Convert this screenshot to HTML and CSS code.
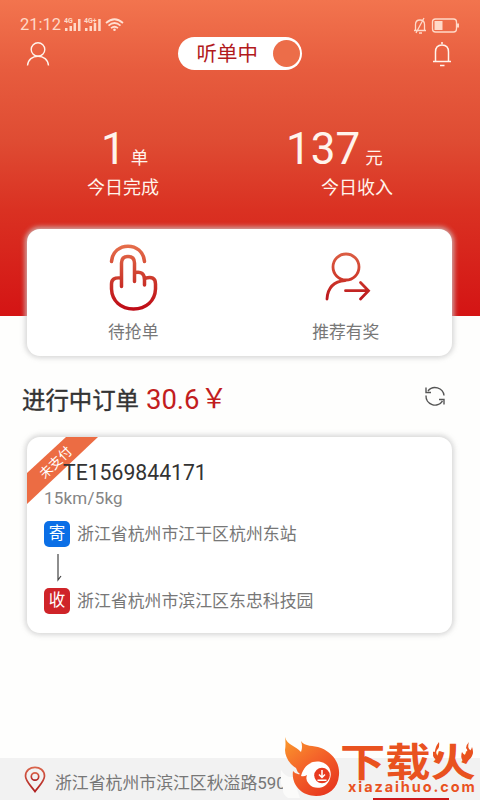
FILE: index.html
```html
<!DOCTYPE html>
<html lang="zh-CN">
<head>
<meta charset="utf-8">
<title>听单中</title>
<link rel="stylesheet" href="styles.css">
</head>
<body>
<div class="screen">
  <header class="hero">
    <div class="status">
      <span class="clock">21:12</span>
      <svg class="signal" width="62" height="16" viewBox="0 0 62 16">
        <g fill="#ffd9c8">
          <path d="M1 11h2.500v3H1zM5.500 9H8v5H5.500zM9.500 6H12v8H9.500zM14 2h2.500v12H14z"/>
          <path d="M21 11h2.500v3H21zM25.500 9H28v5h-2.500zM29.700 6h2.500v8h-2.500zM34.200 2h2.500v12h-2.500z"/>
          <text x="0" y="6" class="net">4G</text>
          <text x="20" y="6" class="net">4G+</text>
        </g>
        <g fill="none" stroke="#ffe0d2" stroke-width="1.700">
          <path d="M42 6Q50.500-1.500 59 6M44.500 8.600Q50.500 3.400 56.500 8.600M47 11.200Q50.500 8.300 54 11.200"/>
        </g>
        <circle cx="50.500" cy="12.800" r="1.300" fill="#ffe0d2"/>
      </svg>
      <svg class="battery" width="48" height="18" viewBox="0 0 48 18" fill="none" stroke="#ffd9c8" stroke-width="1.300">
        <path d="M2 14.500h12M3.500 14V8.500Q3.500 4 8 4t4.500 4.500V14M4 17L12 2M7 17h3"/>
        <rect x="20.500" y="3" width="24" height="13" rx="3"/>
        <rect x="22.500" y="5" width="8" height="9" fill="#ffd9c8" stroke="none"/>
        <path d="M46 7.500v4" stroke-width="2"/>
      </svg>
    </div>
    <div class="topbar">
      <svg width="24" height="26" viewBox="0 0 24 26" fill="none" stroke="#fff4ec" stroke-width="1.400">
        <circle cx="12" cy="8.500" r="6.800"/><path d="M1.500 24.500C2 18.500 6.500 15.300 12 15.300S22 18.500 22.500 24.500"/>
      </svg>
      <div class="toggle"><span>听单中</span><i></i></div>
      <svg width="20" height="26" viewBox="0 0 20 26" fill="none" stroke="#fff4ec" stroke-width="1.500">
        <path d="M1 20.500h18M3.500 20V11Q3.500 4 10 4t6.500 7v9M10 1v2M8 24.500h4.500"/>
      </svg>
    </div>
    <div class="stats">
      <div class="stat done"><p class="figure">1<small>单</small></p><p class="caption">今日完成</p></div>
      <div class="stat income"><p class="figure">137<small>元</small></p><p class="caption">今日收入</p></div>
    </div>
  </header>

  <section class="card actions">
    <div class="action grab">
      <svg width="50" height="68" viewBox="0 0 50 68" fill="none" stroke="url(#warm)" stroke-width="3.500" stroke-linecap="round" stroke-linejoin="round">
        <defs><linearGradient id="warm" gradientUnits="userSpaceOnUse" x1="0" y1="0" x2="0" y2="68"><stop offset="0" stop-color="#e6704c"/><stop offset=".5" stop-color="#cd3b2d"/><stop offset="1" stop-color="#bd0714"/></linearGradient></defs>
        <path d="M3.500 17.500C5-3 35-3 36.500 17.500"/>
        <path d="M13.500 42.500V19Q13.500 12.500 20 12.500T26.500 19V37.500M27 28.500Q36.500 26.500 36.500 36V41M36.500 34.500Q47.500 31 47.500 40V45C47 57 38 65 25.500 65S4 57 3.500 45V40Q3.500 33 12.500 34"/>
      </svg>
      <span>待抢单</span>
    </div>
    <div class="action invite">
      <svg width="48" height="52" viewBox="0 0 48 52" fill="none" stroke="url(#red)" stroke-width="2.800" stroke-linecap="round">
        <defs><linearGradient id="red" gradientUnits="userSpaceOnUse" x1="0" y1="0" x2="0" y2="52"><stop offset="0" stop-color="#dc6045"/><stop offset=".5" stop-color="#cf3b2c"/><stop offset="1" stop-color="#b8101a"/></linearGradient></defs>
        <circle cx="22" cy="16" r="13"/><path d="M21 29.500Q4 31 3 48"/><path d="M21.500 39.700H44M36.500 31.500L44.500 39.700L36.500 48"/>
      </svg>
      <span>推荐有奖</span>
    </div>
  </section>

  <div class="heading">
    <h1>进行中订单</h1><span class="amount">30.6</span><span class="currency">￥</span>
    <svg width="22" height="22" viewBox="0 0 22 22" fill="none" stroke="#555" stroke-width="1.400">
      <path d="M4 6A9 9 0 0 1 20 10.500M18.500 16A9 9 0 0 1 2 10.500M2 2.500V7.500H7M20 19.500V14.500H15"/>
    </svg>
  </div>

  <section class="card order">
    <div class="ribbon"><span>未支付</span></div>
    <div class="order-id">TE1569844171</div>
    <div class="meta">15km/5kg</div>
    <div class="place"><i class="tag send">寄</i><span>浙江省杭州市江干区杭州东站</span></div>
    <svg class="down" width="10" height="28" viewBox="0 0 10 28" fill="none" stroke="#444" stroke-width="1.200"><path d="M5 0v26L8 22"/></svg>
    <div class="place"><i class="tag receive">收</i><span>浙江省杭州市滨江区东忠科技园</span></div>
  </section>

  <footer class="location">
    <svg width="22" height="27" viewBox="0 0 22 27" fill="none" stroke="url(#pin)" stroke-width="1.700">
      <defs><linearGradient id="pin" x1="0" y1="0" x2="0" y2="1"><stop stop-color="#d9634a"/><stop offset="1" stop-color="#ae1f20"/></linearGradient></defs>
      <path d="M11 25.500C8 21 1.500 15.500 1.500 10C1.500-1.600 20.500-1.600 20.500 10C20.500 15.500 14 21 11 25.500Z"/><circle cx="11" cy="10.500" r="3.700"/>
    </svg>
    <span>浙江省杭州市滨江区秋溢路590</span>
    <i class="button-edge"></i>
  </footer>

  <div class="watermark">
    <svg class="flame" width="66" height="64" viewBox="0 0 66 64">
      <defs><linearGradient id="fire" x1="0" y1="0" x2=".7" y2="1"><stop stop-color="#fa9a2c"/><stop offset=".5" stop-color="#f4642a"/><stop offset="1" stop-color="#e8391f"/></linearGradient></defs>
      <path d="M5 34Q10 42 17 41L24 62H12Q6 58 7 52L5 48Z" fill="#fbfbfa"/>
      <path d="M9 1C11 9 20 10 25 16Q27 11 25 5C29 11 37 9 45 12C57 17 64 27 63 39C62 53 52 60 40 60C26 60 15 49 17 35Q20 39 24 38Q21 36 20 32C13 28 9 20 9 14Q10 8 9 1Z" fill="url(#fire)"/>
      <path d="M25 40C28 29 36 24 45 26C54 28 57 37 53 45C49 53 38 54 33 48Q29 44 31 39Q28 41 25 40Z" fill="#fff"/><circle cx="46" cy="39.500" r="7.800" fill="#e83a20"/>
      <path d="M46 34v7M43 38.500l3 3 3-3M41.500 44.300h9" fill="none" stroke="#fff" stroke-width="1.500"/>
    </svg>
    <div class="brand">
      <div class="brand-name"><span>下载火</span><svg class="sparks" width="44" height="22" viewBox="0 0 44 22"><path d="M7 0Q8 5 5 8Q3 11 6 14Q7 11 9 9Q11 14 8 19Q0 18 1 10Q2 9 3 10Q3 5 7 0ZM37 0Q35 5 38 8Q39 9 40 5Q42 10 40 14Q38 19 31 19Q28 15 30 10Q31 12 33 13Q37 9 34 6Q34 3 37 0Z"/></svg></div>
      <div class="brand-url">xiazaihuo.com</div>
    </div>
  </div>
</div>
</body>
</html>
```

FILE: styles.css
```css
* { box-sizing: border-box; }
body { margin: 0; font-family: Roboto, "Noto Sans CJK SC", sans-serif; }
p, h1 { margin: 0; }
i { font-style: normal; }
svg { display: block; flex: none; }
.screen { position: relative; width: 480px; height: 800px; overflow: hidden; background: #fefefd; display: flex; flex-direction: column; }

.hero { flex: none; height: 316px; background: linear-gradient(#f2744e 0, #e75c3e 70px, #df4c33 140px, #da3122 210px, #d41414 316px); color: #fff4ec; }
.status { display: flex; align-items: center; height: 34px; padding: 15px 20px 0 20px; }
.clock { font-size: 16.500px; color: #ffd9c8; width: 44px; line-height: 20px; }
.net { font: 700 7px Roboto, sans-serif; }
.battery { margin-left: auto; }
.topbar { display: flex; justify-content: space-between; align-items: center; height: 39px; padding: 0 28px 0 26px; }
.toggle { display: flex; align-items: center; justify-content: space-between; width: 124px; height: 33px; margin-right: 3px; padding: 0 2px 0 19px; border-radius: 17px; background: #fff; color: #b21a1d; font-size: 20.500px; }
.toggle span { margin-top: -3px; }
.toggle i { width: 27px; height: 27px; border-radius: 50%; background: #ec6d49; }
.stats { display: flex; padding-top: 50px; }
.stat { flex: none; }
.done { width: 286px; padding-left: 87px; }
.figure { height: 53px; font-size: 44px; line-height: 52px; white-space: nowrap; }
.done .figure { padding-left: 14px; }
.figure small { font-size: 17.500px; margin-left: 5px; }
.caption { height: 24px; font-size: 18px; line-height: 24px; }
.income .caption { padding-left: 35px; }

.card { position: relative; flex: none; width: 425px; margin-left: 27px; border-radius: 13px; background: #fff; box-shadow: 0 0 5px 2px rgba(205, 205, 205, .8); }
.actions { display: flex; height: 127px; margin-top: -87px; }
.action { display: flex; flex-direction: column; align-items: center; justify-content: space-between; width: 213px; padding: 15px 0 11px; color: #777; font-size: 16.800px; line-height: 26px; }
.invite { padding-top: 22px; }
.invite svg { margin-left: 5px; }

.heading { display: flex; align-items: center; flex: none; height: 40px; margin-top: 23px; padding: 0 34px 0 22px; }
.heading h1 { font-size: 23.400px; font-weight: 400; color: #333; -webkit-text-stroke: .4px #333; }
.amount { margin-left: 7px; font-size: 27.500px; color: #c21d20; }
.currency { font-size: 27px; line-height: 30px; width: 27px; margin-left: 1px; color: #c21d20; }
.heading svg { margin-left: auto; margin-top: -6px; }

.order { height: 196px; margin-top: 18px; padding: 23px 18px 0 17px; }
.ribbon { position: absolute; left: 0; top: 0; width: 71px; height: 68px; border-top-left-radius: 13px; background: #ec6c43; clip-path: polygon(39px 0, 71px 0, 0 67px, 0 36px); color: #fff; font-size: 13px; line-height: 18px; }
.ribbon span { display: block; width: 40px; margin: 17px 0 0 9px; text-align: center; transform: rotate(-44deg); white-space: nowrap; }
.order-id { position: relative; padding-left: 19px; font-size: 21.200px; line-height: 25px; color: #333; }
.meta { font-size: 17px; line-height: 27px; height: 36px; color: #858585; letter-spacing: .2px; }
.place { display: flex; align-items: center; height: 26px; color: #777; font-size: 16.900px; line-height: 26px; white-space: nowrap; }
.place span { margin-top: -1px; }
.tag { display: flex; align-items: center; justify-content: center; width: 26px; height: 26px; margin-right: 7px; border-radius: 5px; color: #fff; font-size: 16.500px; }
.send { background: #0b6fe6; }
.receive { background: #cf2429; }
.down { margin: 7px 0 6px 9px; }

.location { position: relative; display: flex; align-items: center; flex: none; height: 42px; margin-top: auto; padding: 0 24px; background: #f2f2f2; color: #777; font-size: 16.860px; white-space: nowrap; }
.location span { margin-left: 9px; padding-top: 4px; }
.button-edge { position: absolute; left: 373px; bottom: 0; width: 76px; height: 2px; background: #cc1719; }

.watermark { position: absolute; left: 276px; top: 736px; display: flex; width: 204px; height: 64px; }
.flame { width: 66px; }
.brand { margin-left: -2px; color: #e9521f; }
.brand-name { position: relative; height: 40px; margin-top: 8px; font: 700 39px/38px "Noto Sans CJK SC", sans-serif; white-space: nowrap; }
.brand-name span { display: block; transform: scaleX(1.160); transform-origin: 0 0; margin-top: -4px; width: 117px; }
.sparks { position: absolute; left: 92px; top: 2px; fill: currentColor; }
.brand-url { margin: -1px 0 0 8px; font: 700 14.500px/16px Inter, sans-serif; letter-spacing: 1.900px; white-space: nowrap; }
```
